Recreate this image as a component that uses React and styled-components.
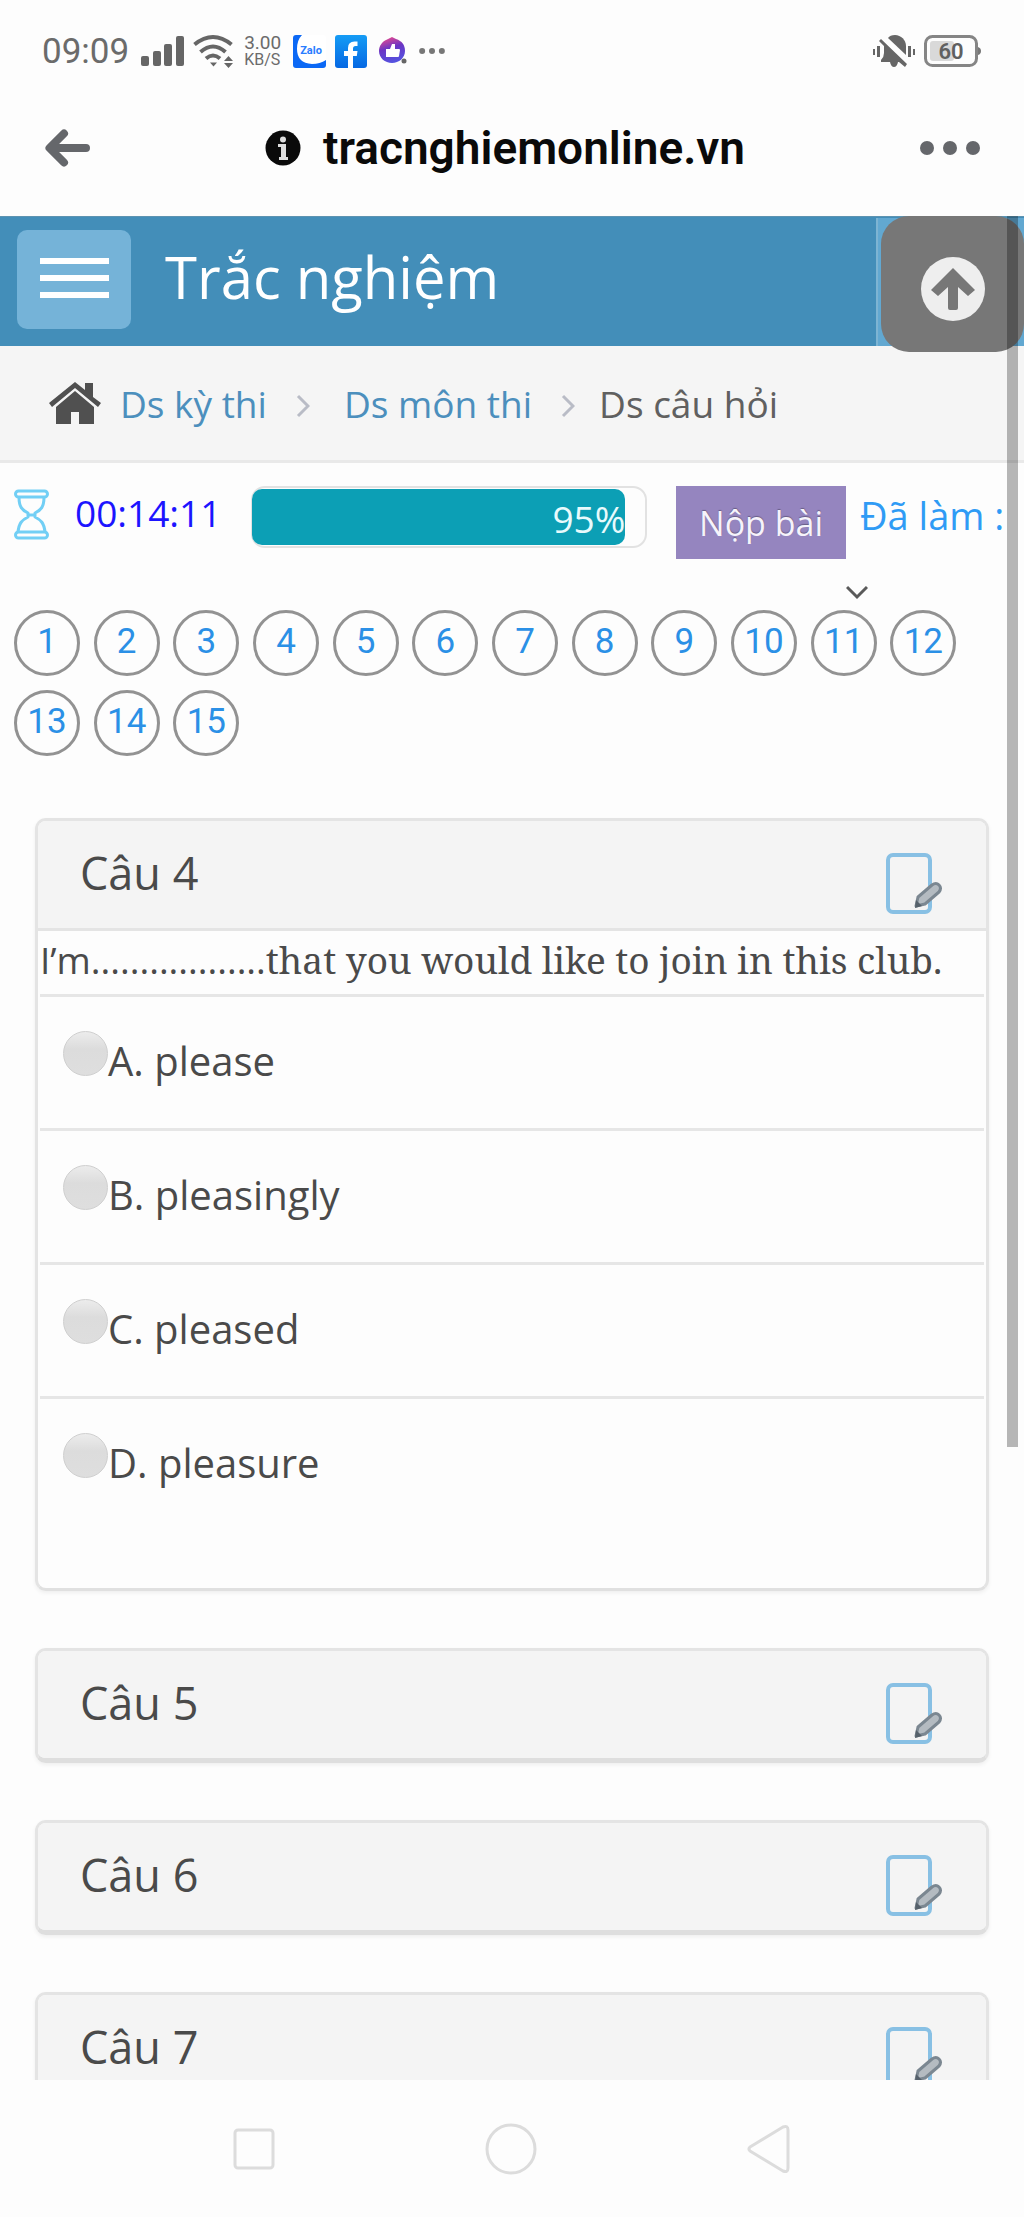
import React, { useState } from 'react';
import styled, { createGlobalStyle } from 'styled-components';

const GlobalStyle = createGlobalStyle`
  * {
    box-sizing: border-box;
  }

  body {
    margin: 0;
    background-color: #fdfdfd;
    color: #4a4a4a;
    font-family: "Open Sans", "Noto Sans", sans-serif;
    font-size: 38px;
  }

  button {
    border: none;
    padding: 0;
    background: none;
    font: inherit;
    cursor: pointer;
  }

  svg {
    display: block;
    flex: none;
  }
`;

const Screen = styled.div`
  height: 100vh;
  display: flex;
  flex-direction: column;
`;

const StatusBar = styled.div`
  height: 102px;
  flex: none;
  display: flex;
  align-items: center;
  justify-content: space-between;
  padding: 0 42px;
  font-family: Roboto, sans-serif;
  color: #6b6b6b;
`;

const StatusGroup = styled.div`
  display: flex;
  align-items: center;
  gap: ${props => props.$gap}px;
`;

const Clock = styled.span`
  font-size: 35px;
  margin-right: 3px;
`;

const Speed = styled.div`
  display: flex;
  flex-direction: column;
  margin-right: 3px;
  font-size: 19px;
  line-height: 18px;

  small {
    font-size: 16px;
    line-height: 16px;
  }
`;

const BrowserBar = styled.div`
  height: 114px;
  flex: none;
  display: flex;
  align-items: center;
  justify-content: space-between;
  padding: 0 43px 22px 44px;
`;

const Address = styled.div`
  display: flex;
  align-items: center;
  gap: 22px;
  font-family: Roboto, sans-serif;
  font-size: 46px;
  font-weight: 600;
  color: #0a0a0a;
`;

const Page = styled.div`
  flex: 1;
  min-height: 0;
  position: relative;
  overflow: hidden;
`;

const Navbar = styled.header`
  height: 130px;
  display: flex;
  align-items: flex-start;
  padding: 13px 17px;
  background-color: #438eb9;
  border-top: 1px solid #5d93b1;
`;

const MenuButton = styled.button`
  width: 114px;
  height: 99px;
  padding-bottom: 4px;
  border-radius: 10px;
  background-color: #75b3d8;
  display: flex;
  flex-direction: column;
  align-items: center;
  justify-content: center;
  gap: 11px;

  span {
    width: 69px;
    height: 6px;
    background-color: white;
  }
`;

const Brand = styled.h1`
  margin: 0 0 0 34px;
  font-size: 58px;
  font-weight: 400;
  line-height: 94px;
  color: white;
`;

const UserMenu = styled.div`
  position: absolute;
  top: 2px;
  right: 0;
  width: 148px;
  height: 128px;
  background-color: #62a8d1;
  border-left: 2px solid #7db4d3;
`;

const ScrollTop = styled.button`
  position: absolute;
  top: 0;
  right: 0;
  width: 143px;
  height: 136px;
  padding-top: 10px;
  border-radius: 28px;
  background-color: #777;
  display: flex;
  align-items: center;
  justify-content: center;
`;

const ScrollThumb = styled.div`
  position: absolute;
  top: 0;
  right: 6px;
  width: 11px;
  height: 1231px;
  background-color: rgba(0, 0, 0, 0.28);
`;

const Breadcrumb = styled.nav`
  height: 117px;
  display: flex;
  align-items: center;
  padding: 0 48px;
  background-color: #f5f5f5;
  border-bottom: 3px solid #e9e9e9;
  color: #606060;
  font-size: 37px;

  a {
    margin-left: 10px;
    color: #4c8fbd;
    text-decoration: none;
  }

  a:first-of-type {
    margin-left: 18px;
  }
`;

const Separator = styled.svg`
  margin: 6px 24px 0 29px;
`;

const Toolbar = styled.div`
  display: grid;
  grid-template-columns: 35px 150px 1fr auto;
  column-gap: 26px;
  align-items: start;
  padding: 23px 17px 0 14px;
  white-space: nowrap;
`;

const Timer = styled.span`
  font-size: 37px;
  line-height: 54px;
  color: #1c14ff;
`;

const Progress = styled.div`
  height: 62px;
  padding: 1px 0;
  border: 2px solid #e2e2e2;
  border-left-width: 1px;
  border-radius: 14px;
`;

const ProgressFill = styled.div`
  height: 56px;
  line-height: 60px;
  border-radius: 10px;
  background-color: #0c9fb5;
  color: #e8fafc;
  text-align: right;
  font-size: 37px;
`;

const Actions = styled.div`
  display: flex;
  align-items: flex-start;
  gap: 14px;
  padding-left: 3px;
`;

const SubmitButton = styled.button`
  height: 73px;
  padding: 0 23px;
  background-color: #9585bf;
  color: #f6f3fb;
  font-size: 34px;
  text-shadow: 0 -1px 1px rgba(0, 0, 0, 0.3);
`;

const Answered = styled.span`
  width: 147px;
  overflow: hidden;
  line-height: 58px;
  color: #2f9bf5;
`;

const Toggle = styled.button`
  display: block;
  margin: 26px 156px 10px auto;
`;

const NumberGrid = styled.div`
  display: grid;
  grid-template-columns: repeat(12, 1fr);
  row-gap: 14px;
  padding: 0 54px 0 14px;
`;

const NumberButton = styled.button`
  width: 66px;
  height: 66px;
  padding-bottom: 4px;
  border: 3px solid #929292;
  border-radius: 50%;
  font-family: Roboto, sans-serif;
  font-size: 35px;
  color: #2b90e6;
`;

const QuestionList = styled.main`
  display: flex;
  flex-direction: column;
  gap: 57px;
  padding: 62px 35px 0;
`;

const Card = styled.section`
  border: 3px solid #e4e4e4;
  border-bottom: ${props => (props.$open ? '3px solid #e0e0e0' : '5px solid #dedede')};
  border-radius: 11px;
  box-shadow: 0 2px 4px rgba(0, 0, 0, 0.06);
  overflow: hidden;
`;

const CardHeader = styled.div`
  height: 107px;
  display: flex;
  align-items: flex-start;
  justify-content: space-between;
  padding: 0 43px 0 42px;
  background-color: #f4f4f4;

  h2 {
    margin: 0;
    font-size: 45px;
    font-weight: 400;
    line-height: 104px;
  }

  button {
    margin-top: 32px;
  }
`;

const CardBody = styled.fieldset`
  min-width: 0;
  margin: 0;
  padding: 0 2px 58px;
  border: none;
  border-top: 3px solid #e4e4e4;
`;

const Prompt = styled.p`
  margin: 0;
  height: 63px;
  font-size: 37px;
  line-height: 58px;
  white-space: nowrap;

  span {
    font-family: "Noto Serif", "DejaVu Serif Condensed", "DejaVu Serif", serif;
  }
`;

const Option = styled.label`
  height: 134px;
  display: flex;
  align-items: flex-start;
  padding: 34px 23px 0;
  border-top: 3px solid #e6e6e6;
  font-size: 40px;
  line-height: 60px;
`;

const Radio = styled.input`
  appearance: none;
  width: 45px;
  height: 45px;
  margin: 0;
  border: 1px solid #cfcfcf;
  border-radius: 50%;
  background: linear-gradient(#ececec, #dcdcdc 40%, #dedede);

  &:checked {
    background: radial-gradient(#438eb9 35%, #dedede 40%);
  }
`;

const SystemNav = styled.nav`
  height: 137px;
  flex: none;
  display: flex;
  justify-content: space-around;
  align-items: center;
  padding: 0 128px;
  background-color: #fdfdfd;
`;

const SignalIcon = () => (
  <svg width="43" height="32" viewBox="0 0 43 32" fill="#666">
    <rect x="0" y="21" width="8" height="10" rx="2" />
    <rect x="12" y="16" width="8" height="15" rx="2" />
    <rect x="23" y="9" width="8" height="22" rx="2" />
    <rect x="35" y="1" width="8" height="30" rx="2" />
  </svg>
);

const WifiIcon = () => (
  <svg width="42" height="34" viewBox="0 0 42 34" fill="none" stroke="#666" strokeWidth="4">
    <path d="M1.500 10.500Q20 -4.500 38.500 10.500M7.500 18Q20 7 32.500 18M13 24.500Q20 18.500 27 24.500" />
    <path d="M17 28.500h7l-3.500 4z" fill="#666" stroke="none" />
    <path d="M31 27l4.500-5 4.500 5zM31 29h9l-4.500 5z" fill="#666" stroke="none" />
  </svg>
);

const ZaloIcon = () => (
  <svg width="33" height="33" viewBox="0 0 33 33">
    <rect width="33" height="33" rx="3" fill="#fff" />
    <path d="M9 0H3Q0 0 0 3v27q0 3 3 3h27q3 0 3-3v-5q-6 4-14 4Q4 28 4 14 4 5 9 0z" fill="#0b68f5" />
    <text x="18" y="19" textAnchor="middle" fontFamily="Roboto, sans-serif" fontSize="11" fontWeight="700" fill="#2a7dff">Zalo</text>
  </svg>
);

const FacebookIcon = () => (
  <svg width="32" height="33" viewBox="0 0 32 33">
    <defs>
      <linearGradient id="fb" x1="0" y1="0" x2="0" y2="1">
        <stop offset="0" stopColor="#159cf5" />
        <stop offset="1" stopColor="#0668e3" />
      </linearGradient>
    </defs>
    <rect width="32" height="33" rx="3" fill="url(#fb)" />
    <path d="M13 33V21H9v-5h4v-3q0-6.500 6.500-6.500h3V11h-2q-2.500 0-2.500 2.500V16h4.500l-.7 5H18v12z" fill="#fff" />
  </svg>
);

const LikeIcon = () => (
  <svg width="32" height="30" viewBox="-2 0 32 30">
    <defs>
      <linearGradient id="like" x1="0.200" y1="0" x2="0.500" y2="1">
        <stop offset="0" stopColor="#ef4a8c" />
        <stop offset="0.450" stopColor="#6a35c4" />
        <stop offset="1" stopColor="#5553e0" />
      </linearGradient>
    </defs>
    <path d="M14 1l4 2c6 2 9 6 9 12 0 7-6 12-13 12S1 22 1 15c0-5 3-9 7-11z" fill="url(#like)" />
    <path d="M8 13h4l2-5h3v5h4q1 0 1 1l-1 6q0 1-1 1H8z" fill="#fff" />
    <circle cx="26" cy="25" r="2.500" fill="#666" />
  </svg>
);

const DotsIcon = ({ size, color }) => (
  <svg width={size * 4 + 6} height={size} viewBox="0 0 62 14" fill={color}>
    <circle cx="8" cy="7" r="7" />
    <circle cx="31" cy="7" r="7" />
    <circle cx="54" cy="7" r="7" />
  </svg>
);

const MutedIcon = () => (
  <svg width="44" height="34" viewBox="0 0 44 34" fill="#666">
    <path d="M16 4Q18 1 23 1c6 0 11 5 11 11v9z" />
    <path d="M9 5l26 25-2 3-6-5h-1q-1 5-4 5t-4-5H9v-2q3-3 3-7v-7L7 7z" />
    <path d="M5 12h3v11H5zM1 15h2v6H1zM36 12h3v11h-3zM41 15h2v6h-2z" />
  </svg>
);

const BatteryIcon = () => (
  <svg width="58" height="32" viewBox="0 0 58 32">
    <rect x="1.500" y="1.500" width="51" height="29" rx="7" fill="none" stroke="#858585" strokeWidth="3" />
    <rect x="6" y="6" width="24" height="20" rx="3" fill="#d9d9d9" />
    <path d="M54 12q3 1 3 4t-3 4z" fill="#777" />
    <text x="27" y="24" textAnchor="middle" fontFamily="Roboto, sans-serif" fontSize="22" fontWeight="600" fill="#606060">60</text>
  </svg>
);

const BackIcon = () => (
  <svg width="47" height="38" viewBox="0 0 47 38" fill="none" stroke="#65676b" strokeWidth="8" strokeLinecap="round" strokeLinejoin="round">
    <path d="M20 4.500L5.500 19 20 33.500M6 19h36" />
  </svg>
);

const InfoIcon = () => (
  <svg width="36" height="36" viewBox="0 0 36 36">
    <circle cx="18" cy="18" r="17.500" fill="#0a0a0a" />
    <circle cx="18" cy="9.500" r="3" fill="#ddd" />
    <path d="M13 14h8v13h2v3H14v-3h2V17h-3z" fill="#ddd" />
  </svg>
);

const HomeIcon = () => (
  <svg width="54" height="44" viewBox="0 0 54 44" fill="#505050">
    <path d="M27 1L1 22l3 4L27 7l23 19 3-4-8-6V2h-8v7z" />
    <path d="M27 10L8 26v17h15V31h8v12h15V26z" />
  </svg>
);

const ChevronRight = () => (
  <Separator width="14" height="24" viewBox="0 0 14 24" fill="none" stroke="#b9bcc6" strokeWidth="3">
    <path d="M2 2l10 10L2 22" />
  </Separator>
);

const HourglassIcon = () => (
  <svg width="35" height="54" viewBox="0 0 35 54" fill="none" stroke="#72cff5" strokeWidth="3" strokeLinejoin="round">
    <rect x="1.500" y="5" width="32" height="6" rx="3" />
    <rect x="1.500" y="46" width="32" height="6" rx="3" />
    <path d="M5 11c0 10 3 13 9 16v4c-6 3-9 6-10 15M30 11c0 10-3 13-9 16v4c6 3 9 6 10 15" />
    <path d="M14 29h7" />
  </svg>
);

const NoteIcon = () => (
  <svg width="57" height="62" viewBox="0 0 57 62" fill="none">
    <rect x="2" y="2" width="42" height="57" rx="5" stroke="#88c0e4" strokeWidth="4" />
    <path d="M30 53l2-9 14-12q4-3 7 0t0 7L39 51z" fill="#b4bbc1" stroke="#7b8791" strokeWidth="3" strokeLinejoin="round" />
    <path d="M29 55l1-8 6 6z" fill="#56616b" />
  </svg>
);

const questions = [
  {
    id: 4,
    prompt: 'that you would like to join in this club.',
    options: ['A. please', 'B. pleasingly', 'C. pleased', 'D. pleasure'],
  },
  { id: 5 },
  { id: 6 },
  { id: 7 },
];

const Question = ({ question }) => {
  const { id, prompt, options } = question;

  return (
    <Card $open={!!options}>
      <CardHeader>
        <h2>Câu {id}</h2>
        <button type="button" aria-label={`Ghi chú câu ${id}`}><NoteIcon /></button>
      </CardHeader>
      {options && (
        <CardBody>
          <Prompt>I’m..................<span>{prompt}</span></Prompt>
          {options.map(option => (
            <Option key={option}>
              <Radio type="radio" name={`question-${id}`} value={option} />
              {option}
            </Option>
          ))}
        </CardBody>
      )}
    </Card>
  );
}

const App = () => {
  const [showNumbers, setShowNumbers] = useState(true);
  const percent = 95;

  return (
    <Screen>
      <GlobalStyle />
      <StatusBar>
        <StatusGroup $gap={9}>
          <Clock>09:09</Clock>
          <SignalIcon />
          <WifiIcon />
          <Speed>3.00<small>KB/S</small></Speed>
          <ZaloIcon />
          <FacebookIcon />
          <LikeIcon />
          <DotsIcon size={6} color="#777" />
        </StatusGroup>
        <StatusGroup $gap={8}>
          <MutedIcon />
          <BatteryIcon />
        </StatusGroup>
      </StatusBar>

      <BrowserBar>
        <button type="button" aria-label="Quay lại"><BackIcon /></button>
        <Address><InfoIcon />tracnghiemonline.vn</Address>
        <button type="button" aria-label="Thêm"><DotsIcon size={14} color="#65676b" /></button>
      </BrowserBar>

      <Page>
        <Navbar>
          <MenuButton type="button" aria-label="Menu"><span /><span /><span /></MenuButton>
          <Brand>Trắc nghiệm</Brand>
          <UserMenu />
        </Navbar>

        <Breadcrumb>
          <HomeIcon />
          <a href="#exams">Ds kỳ thi</a>
          <ChevronRight />
          <a href="#subjects">Ds môn thi</a>
          <ChevronRight />
          <span>Ds câu hỏi</span>
        </Breadcrumb>

        <Toolbar>
          <HourglassIcon />
          <Timer>00:14:11</Timer>
          <Progress>
            <ProgressFill style={{ width: `${percent}%` }}>{percent}%</ProgressFill>
          </Progress>
          <Actions>
            <SubmitButton type="button">Nộp bài</SubmitButton>
            <Answered>Đã làm :</Answered>
          </Actions>
        </Toolbar>

        <Toggle type="button" aria-label="Danh sách câu" onClick={() => setShowNumbers(!showNumbers)}>
          <svg width="22" height="15" viewBox="0 0 22 15" fill="none" stroke="#5a5a5a" strokeWidth="3">
            <path d="M1 2l10 10L21 2" />
          </svg>
        </Toggle>

        {showNumbers && (
          <NumberGrid>
            {Array.from({ length: 15 }, (_, i) => (
              <NumberButton key={i} type="button">{i + 1}</NumberButton>
            ))}
          </NumberGrid>
        )}

        <QuestionList>
          {questions.map(question => <Question key={question.id} question={question} />)}
        </QuestionList>

        <ScrollTop type="button" aria-label="Lên đầu trang">
          <svg width="64" height="64" viewBox="0 0 64 64">
            <circle cx="32" cy="32" r="32" fill="#eee" />
            <path d="M32 11L10 33l7 6 10-9v21q0 2 2 2h6q2 0 2-2V30l10 9 7-6z" fill="#777" />
          </svg>
        </ScrollTop>
        <ScrollThumb />
      </Page>

      <SystemNav>
        <button type="button" aria-label="Gần đây">
          <svg width="42" height="42" viewBox="0 0 42 42" fill="none" stroke="#dcdcdc" strokeWidth="3">
            <rect x="2" y="2" width="38" height="38" rx="3" />
          </svg>
        </button>
        <button type="button" aria-label="Trang chủ">
          <svg width="52" height="52" viewBox="0 0 52 52" fill="none" stroke="#dcdcdc" strokeWidth="3">
            <circle cx="26" cy="26" r="24" />
          </svg>
        </button>
        <button type="button" aria-label="Trở về">
          <svg width="44" height="50" viewBox="0 0 44 50" fill="none" stroke="#dcdcdc" strokeWidth="3" strokeLinejoin="round">
            <path d="M36 3L3 23q-2 2 0 4l33 20q5 2 5-3V6q0-5-5-3z" />
          </svg>
        </button>
      </SystemNav>
    </Screen>
  );
}

export default App;
